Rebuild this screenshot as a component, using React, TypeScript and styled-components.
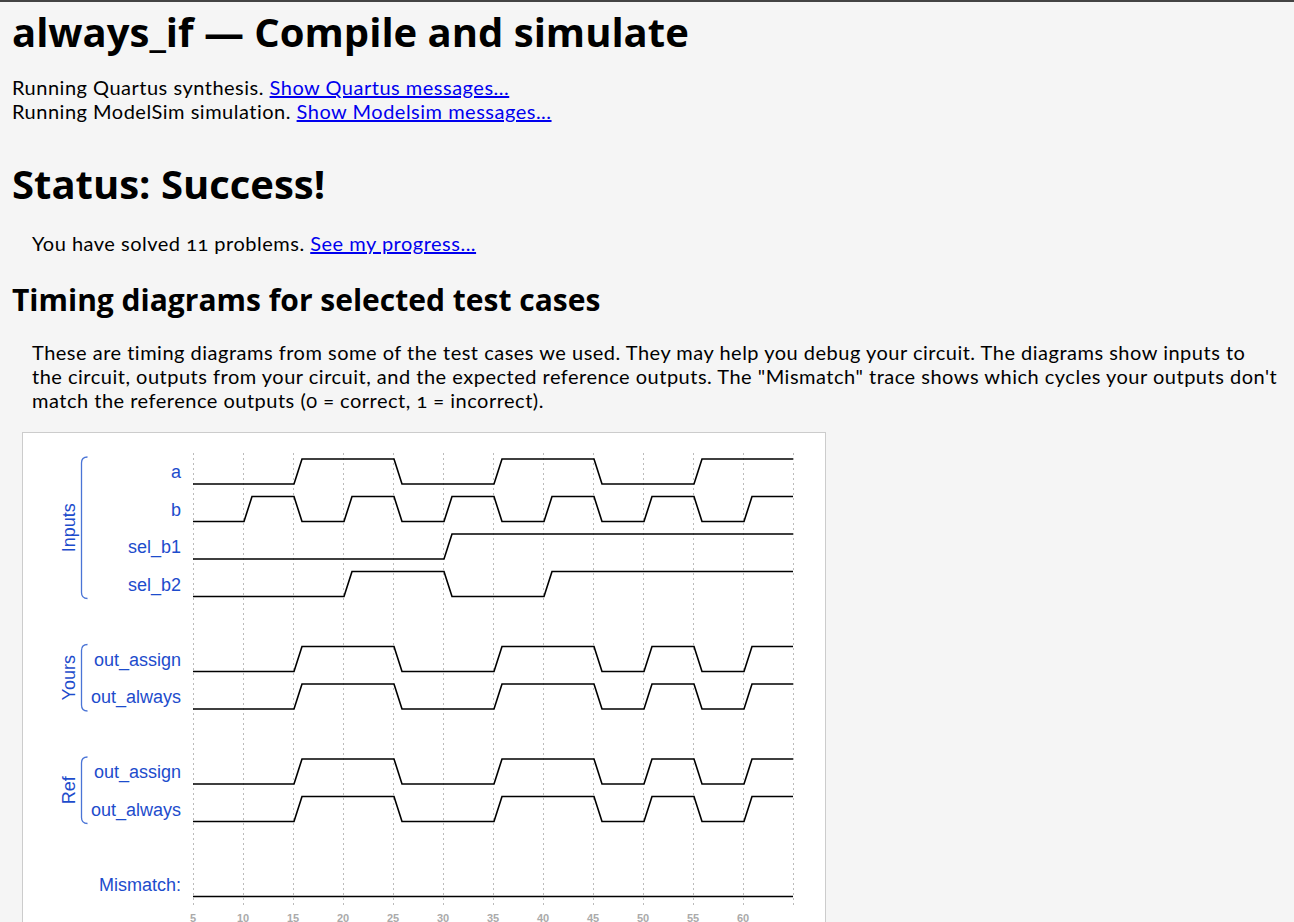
import React from 'react';
import styled, { createGlobalStyle } from 'styled-components';

const GlobalStyle = createGlobalStyle`
    html, body {
        margin: 0;
        padding: 0;
        background: #f5f5f5;
    }
    body {
        border-top: 2px solid #444;
        color: #000;
        font-family: Lato, 'Liberation Sans', sans-serif;
    }
`;

// --- timing data: one value per 5-unit slice from t=5 to t=65
const a = [0, 0, 1, 1, 0, 0, 1, 1, 0, 0, 1, 1];
const b = [0, 1, 0, 1, 0, 1, 0, 1, 0, 1, 0, 1];
const selB1 = [0, 0, 0, 0, 0, 1, 1, 1, 1, 1, 1, 1];
const selB2 = [0, 0, 0, 1, 1, 0, 0, 1, 1, 1, 1, 1];
const out = [0, 0, 1, 1, 0, 0, 1, 1, 0, 1, 0, 1];
const zero = [0, 0, 0, 0, 0, 0, 0, 0, 0, 0, 0, 0];

const traces = [
    { name: 'a', row: 0, data: a },
    { name: 'b', row: 1, data: b },
    { name: 'sel_b1', row: 2, data: selB1 },
    { name: 'sel_b2', row: 3, data: selB2 },
    { name: 'out_assign', row: 5, data: out },
    { name: 'out_always', row: 6, data: out },
    { name: 'out_assign', row: 8, data: out },
    { name: 'out_always', row: 9, data: out },
    { name: 'Mismatch:', row: 11, data: zero },
];

const groups = [
    { name: 'Inputs', from: 0, to: 3 },
    { name: 'Yours', from: 5, to: 6 },
    { name: 'Ref', from: 8, to: 9 },
];

// diagram coords, origin at the box's inner top-left
const X0 = 170;
const STEP = 50;
const TOP = 26;
const PITCH = 37.5;
const SWING = 25;
const LABEL_FONT = "'Liberation Sans', Arial, sans-serif";
const LABEL_BLUE = '#1d4ccc';

const rowHigh = (row: number) => TOP + row * PITCH;

const wavePath = (data: number[], row: number) => {
    const hi = rowHigh(row);
    const lo = hi + SWING;
    const y = (v: number) => (v ? hi : lo);
    let d = `M${X0},${y(data[0])}`;
    for (let i = 1; i < data.length; i++) {
        if (data[i] !== data[i - 1]) {
            const x = X0 + i * STEP;
            d += ` L${x + 1},${y(data[i - 1])} L${x + 9},${y(data[i])}`;
        }
    }
    d += ` L${X0 + data.length * STEP},${y(data[data.length - 1])}`;
    return d;
};

const App = () => (
    <Page>
        <GlobalStyle />
        <Title>always_if — Compile and simulate</Title>
        <Log>
            Running Quartus synthesis. <Link href="#">Show Quartus messages...</Link>
            <br />
            Running ModelSim simulation. <Link href="#">Show Modelsim messages...</Link>
        </Log>
        <Status>Status: Success!</Status>
        <Indented>
            You have solved 11 problems. <Link href="#">See my progress...</Link>
        </Indented>
        <Subtitle>Timing diagrams for selected test cases</Subtitle>
        <Description>
            These are timing diagrams from some of the test cases we used. They may help you debug
            your circuit. The diagrams show inputs to
            <br />
            the circuit, outputs from your circuit, and the expected reference outputs. The
            "Mismatch" trace shows which cycles your outputs don't
            <br />
            match the reference outputs (0 = correct, 1 = incorrect).
        </Description>
        <DiagramBox>
            <svg width="802" height="500" viewBox="0 0 802 500">
                {Array.from({ length: 13 }, (_, k) => (
                    <line
                        key={`g${k}`}
                        x1={X0 + k * STEP + 0.5}
                        x2={X0 + k * STEP + 0.5}
                        y1={20}
                        y2={475}
                        stroke="#bbb"
                        strokeWidth={1}
                        strokeDasharray="2 3"
                    />
                ))}
                {Array.from({ length: 12 }, (_, k) => (
                    <text
                        key={`t${k}`}
                        x={X0 + k * STEP}
                        y={489}
                        textAnchor="middle"
                        fontFamily={LABEL_FONT}
                        fontSize="11"
                        fontWeight="bold"
                        fill="#aaa">
                        {5 + k * 5}
                    </text>
                ))}
                {groups.map((g) => {
                    const top = rowHigh(g.from) - 2;
                    const bottom = rowHigh(g.to) + SWING + 2;
                    const mid = (top + bottom) / 2;
                    return (
                        <g key={g.name}>
                            <path
                                d={`M64.5,${top} Q58.5,${top} 58.5,${top + 6} L58.5,${bottom - 6} Q58.5,${bottom} 64.5,${bottom}`}
                                fill="none"
                                stroke="#4a74d6"
                                strokeWidth={1.3}
                            />
                            <text
                                transform={`translate(51.5,${mid}) rotate(-90)`}
                                textAnchor="middle"
                                fontFamily={LABEL_FONT}
                                fontSize="18"
                                fill={LABEL_BLUE}>
                                {g.name}
                            </text>
                        </g>
                    );
                })}
                {traces.map((t) => (
                    <g key={`${t.name}${t.row}`}>
                        <text
                            x={158}
                            y={rowHigh(t.row) + 19}
                            textAnchor="end"
                            fontFamily={LABEL_FONT}
                            fontSize="18"
                            fill={LABEL_BLUE}>
                            {t.name}
                        </text>
                        <path
                            d={wavePath(t.data, t.row)}
                            fill="none"
                            stroke="#000"
                            strokeWidth={1.6}
                        />
                    </g>
                ))}
            </svg>
        </DiagramBox>
    </Page>
);

export default App;

const Page = styled.div`
    padding: 0 12px;
`;

const Title = styled.h1`
    font-family: 'Open Sans', sans-serif;
    font-size: 40px;
    font-weight: 700;
    line-height: 48px;
    margin: 6px 0 19px;
`;

const Log = styled.div`
    font-size: 20px;
    letter-spacing: 0.5px;
    line-height: 24px;
`;

const Link = styled.a`
    color: #0000ee;
    text-decoration: underline;
`;

const Status = styled.h2`
    font-family: 'Open Sans', sans-serif;
    font-size: 40px;
    font-weight: 700;
    line-height: 48px;
    margin: 37px 0 23px;
`;

const Indented = styled.p`
    font-size: 20px;
    font-variant-numeric: oldstyle-nums;
    letter-spacing: 0.5px;
    line-height: 24px;
    margin: 0 0 0 20px;
`;

const Subtitle = styled.h3`
    font-family: 'Open Sans', sans-serif;
    font-size: 30px;
    font-weight: 700;
    line-height: 36px;
    margin: 27px 0 22px;
`;

const Description = styled(Indented)`
    margin-bottom: 20px;
    white-space: nowrap;
`;

const DiagramBox = styled.div`
    background: #fff;
    border: 1px solid #ccc;
    display: inline-block;
    margin-left: 10px;
    line-height: 0;
`;
